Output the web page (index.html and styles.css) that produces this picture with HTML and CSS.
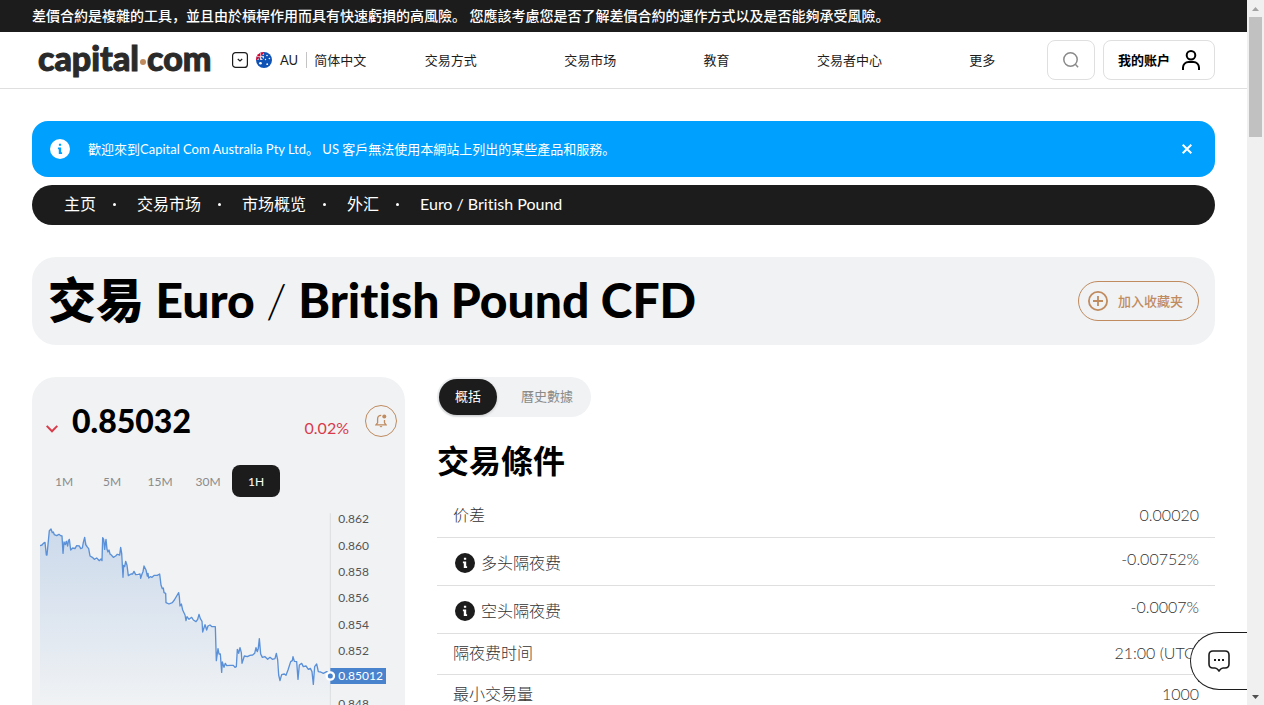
FILE: index.html
```html
<!DOCTYPE html>
<html lang="zh-Hans">
<head>
<meta charset="utf-8">
<meta name="viewport" content="width=device-width, initial-scale=1">
<title>交易 Euro / British Pound CFD</title>
<link rel="stylesheet" href="styles.css">
</head>
<body>
<svg class="defs" width="0" height="0" aria-hidden="true">
  <symbol id="info" viewBox="0 0 20 20"><circle cx="10" cy="10" r="10" fill="currentColor"/><path d="M8.900 4.800h2.300v2H8.900zM7.900 8.400h3.300v4.900h.9v1.800H8.800v-4.900h-.9z" class="info-mark"/></symbol>
</svg>
<div class="page">
  <p class="risk">差價合約是複雜的工具，並且由於槓桿作用而具有快速虧損的高風險。 您應該考慮您是否了解差價合約的運作方式以及是否能夠承受風險。</p>

  <header class="header">
    <a class="logo" href="#">capital<span class="logo-dot"></span>com</a>
    <button class="locale" type="button">
      <svg width="16" height="16" viewBox="0 0 16 16" fill="none" stroke="#1c1c1c"><rect x=".6" y=".6" width="14.800" height="14.800" rx="3" stroke-width="1.200"/><path d="M5.800 7l2.200 2 2.200-2" stroke-width="1.200"/></svg>
      <svg width="16" height="16" viewBox="0 0 16 16"><clipPath id="round"><circle cx="8" cy="8" r="8"/></clipPath><g clip-path="url(#round)"><rect width="16" height="16" fill="#0f52b5"/><path d="M0 0h8v8H0z" fill="#d7e3f5"/><path d="M0 0h8v1L1 8H0z" fill="#d80027"/><path d="M5 5l3 3M8 3.500H5.500M3.500 8V5.500" stroke="#0f52b5" stroke-width="1.600"/><path d="M4.600 1v7M1 4.600h7" stroke="#f3d5dd" stroke-width=".8"/><g fill="#fff"><circle cx="4.500" cy="11.300" r="1.300"/><circle cx="11" cy="3.500" r=".8"/><circle cx="13.400" cy="6.500" r=".8"/><circle cx="9.500" cy="7.500" r=".7"/><circle cx="11.200" cy="12.200" r=".9"/></g></g></svg>
      <span class="country">AU</span><span class="language">简体中文</span>
    </button>
    <nav class="nav">
      <a href="#">交易方式</a><a href="#">交易市场</a><a href="#">教育</a><a href="#">交易者中心</a><a href="#">更多</a>
    </nav>
    <button class="box search" type="button" aria-label="搜索">
      <svg width="16" height="16" viewBox="0 0 16 16" fill="none" stroke="#8a8a8a" stroke-width="1.500"><circle cx="7.500" cy="7.500" r="6.700"/><path d="M12.300 12.300l2.800 3"/></svg>
    </button>
    <button class="box account" type="button">我的账户
      <svg width="18" height="20" viewBox="0 0 18 20" fill="none" stroke="#000" stroke-width="2"><circle cx="9" cy="5.300" r="4.300"/><path d="M1 20v-2.500A5.500 5.500 0 0 1 6.500 12h5a5.500 5.500 0 0 1 5.500 5.500V20"/></svg>
    </button>
  </header>

  <main class="main">
    <div class="notice">
      <svg class="notice-icon" width="20" height="20"><use href="#info"/></svg>
      <p>歡迎來到Capital Com Australia Pty Ltd。 US 客戶無法使用本網站上列出的某些產品和服務。</p>
      <button type="button" aria-label="关闭"><svg width="10" height="10" viewBox="0 0 10 10" stroke="#fff" stroke-width="2"><path d="M.7.700l8.600 8.600M9.300.700L.7 9.300"/></svg></button>
    </div>

    <nav class="crumbs" aria-label="breadcrumb">
      <a href="#">主页</a><i></i><a href="#">交易市场</a><i></i><a href="#">市场概览</a><i></i><a href="#">外汇</a><i></i><span>Euro / British Pound</span>
    </nav>

    <div class="title">
      <h1>交易 Euro <span class="slash">/</span> British Pound CFD</h1>
      <button class="favorite" type="button">
        <svg width="20" height="20" viewBox="0 0 20 20" fill="none" stroke="currentColor" stroke-width="1.800"><circle cx="10" cy="10" r="9.100"/><path d="M5 10h10M10 5v10"/></svg>
        <span>加入收藏夹</span>
      </button>
    </div>

    <div class="columns">
      <section class="quote">
        <div class="price-row">
          <svg width="12" height="8" viewBox="0 0 12 8" fill="none" stroke="#d93b4a" stroke-width="2"><path d="M.7.900L6 6.300 11.300.900"/></svg>
          <strong>0.85032</strong>
          <span class="change">0.02%</span>
          <button type="button" class="alert" aria-label="提醒">
            <svg width="12" height="14" viewBox="0 0 12 14" fill="none" stroke="currentColor" stroke-width="1.300"><path d="M6.200 1.300C3.600 1.300 2.600 3 2.600 5v3.800L.9 10.900h10.200L9.500 8.800V6"/><path d="M4.500 11.900h3L6 13.500z" fill="currentColor" stroke="none"/><circle cx="9.300" cy="2.600" r="2" fill="currentColor" stroke="none"/></svg>
          </button>
        </div>
        <div class="ranges">
          <button type="button">1M</button><button type="button">5M</button><button type="button">15M</button><button type="button">30M</button><button type="button" class="active">1H</button>
        </div>
        <svg class="chart" width="357" height="230" viewBox="60 15 1071 690">
          <defs><linearGradient id="fade" x1="0" y1="85" x2="0" y2="610" gradientUnits="userSpaceOnUse"><stop offset="0" stop-color="#4a83cd" stop-opacity=".22"/><stop offset=".6" stop-color="#4a83cd" stop-opacity=".09"/><stop offset="1" stop-color="#4a83cd" stop-opacity="0"/></linearGradient></defs>
          <path d="M931 40V705" stroke="#dcdee0" stroke-width="3"/>
          <path id="area" fill="url(#fade)" d="M60 705V137L66 135 70 130 75 127 79 165 81 165 88 92 93 87 97 98 103 104 126 108 129 160 132 126 148 118 152 150 170 137 187 144 194 112 206 146 210 168 223 178 246 182 248 113 254 148 258 118 264 156 280 172 299 165 302 142 309 232 317 184 325 227 342 214 362 235 372 198 386 234 419 222 423 255 437 280 438 308 457 308 476 278 480 312 498 362 528 365 537 343 548 396 555 374 586 380 589 482 594 446 605 517 612 502 640 496 649 500 652 448 660 443 666 490 673 468 704 460 718 416 722 462 765 476 776 525 780 542 798 526 819 470 830 485 834 538 838 495 876 515 880 553 890 492 895 515 931 528V705z"/>
          <path class="line" d="M60 137L66 135 70 130 75 127 79 165 81 165 88 92 93 87 97 98 100 96 103 104 110 107 117 103 122 107 126 108 129 160 132 126 136 134 139 124 143 138 145 124 148 118 152 150 158 144 165 146 170 137 178 138 182 146 187 144 190 127 194 112 197 134 201 140 206 146 210 168 217 172 223 178 230 174 238 182 243 177 246 182 248 113 251 118 254 148 256 130 258 118 261 148 264 156 267 150 270 162 274 165 280 172 287 168 292 163 299 165 302 142 305 160 309 232 311 196 314 200 317 184 321 196 325 227 333 222 338 222 342 214 347 224 355 223 360 222 362 235 366 222 369 215 372 198 378 210 382 228 384 220 386 234 391 230 396 232 403 226 412 226 419 222 423 255 427 266 430 264 432 278 437 280 438 308 447 312 457 308 463 300 470 288 476 278 478 290 480 318 484 312 488 330 495 345 498 362 501 350 507 358 515 352 520 360 528 365 533 358 537 343 541 356 546 364 548 396 555 374 560 390 564 378 570 375 576 380 586 380 589 482 594 446 597 462 601 462 605 517 607 486 612 502 616 490 620 497 630 496 640 496 645 502 649 500 652 448 656 460 660 443 664 458 666 490 673 468 682 470 690 466 698 465 704 460 708 443 712 455 715 445 718 416 722 462 727 472 735 470 743 478 750 472 757 478 765 476 769 460 773 480 776 525 780 542 785 524 793 522 798 526 804 510 812 485 817 482 819 470 823 484 830 485 834 538 838 495 845 490 850 500 858 498 865 508 871 505 876 515 880 553 884 500 890 492 895 515 902 516 910 520 920 515 928 520 931 528"/>
          <g class="ticks"><text x="955" y="70">0.862</text><text x="955" y="151">0.860</text><text x="955" y="229">0.858</text><text x="955" y="307">0.856</text><text x="955" y="388">0.854</text><text x="955" y="466">0.852</text><text x="955" y="625">0.848</text></g>
          <path d="M931 504h167v48H931z" fill="#4a83cd"/>
          <text class="tag" x="955" y="541">0.85012</text>
          <circle cx="931" cy="528" r="11" fill="#4a83cd" stroke="#fff" stroke-width="7"/>
        </svg>
      </section>

      <section class="details">
        <div class="tabs"><button type="button" class="active">概括</button><button type="button">曆史數據</button></div>
        <h2>交易條件</h2>
        <table class="terms">
          <tr><th scope="row">价差</th><td>0.00020</td></tr>
          <tr class="tall"><th scope="row"><span><svg width="20" height="20"><use href="#info"/></svg>多头隔夜费</span></th><td>-0.00752%</td></tr>
          <tr class="tall"><th scope="row"><span><svg width="20" height="20"><use href="#info"/></svg>空头隔夜费</span></th><td>-0.0007%</td></tr>
          <tr><th scope="row">隔夜费时间</th><td>21:00 (UTC)</td></tr>
          <tr><th scope="row">最小交易量</th><td>1000</td></tr>
        </table>
      </section>
    </div>
  </main>
  <button class="chat" type="button" aria-label="聊天">
    <svg width="22" height="22" viewBox="0 0 22 22" fill="none" stroke="#1c1c1c" stroke-width="1.600"><path d="M5 1h12q4 0 4 4v9q0 4-4 4h-2c-1.800 0-2 .4-4 3-2-2.600-2.200-3-4-3H5q-4 0-4-4V5q0-4 4-4z"/><path d="M6 10h2m2 0h2m2 0h2" stroke-width="2"/></svg>
  </button>
</div>
<div class="scrollbar" aria-hidden="true">
  <svg width="17" height="17"><path d="M5 11l3.500-4 3.500 4z" fill="#a3a3a3"/></svg>
  <div class="thumb"></div>
  <svg class="down" width="17" height="17"><path d="M5 7l3.500 4L12 7z" fill="#505050"/></svg>
</div>
</body>
</html>
```

FILE: styles.css
```css
* { box-sizing: border-box; }
body {
  margin: 0;
  display: flex;
  height: 100vh;
  overflow: hidden;
  background: #fff;
  color: #000;
  font-family: Lato, "Noto Sans CJK SC", sans-serif;
  font-size: 16px;
  font-variant-ligatures: none;
}
p, h1, h2 { margin: 0; }
a { color: inherit; text-decoration: none; }
button {
  padding: 0;
  border: 0;
  background: none;
  color: inherit;
  font: inherit;
  cursor: pointer;
}
svg { flex: none; }
.defs { position: absolute; }
.page { position: relative; flex: 1; min-width: 0; overflow: hidden; }

.risk {
  height: 32px;
  padding: 0 32px;
  background: #1c1c1c;
  color: #fff;
  font-size: 14px;
  font-weight: 500;
  line-height: 32px;
  white-space: nowrap;
}

.header {
  display: flex;
  align-items: center;
  height: 57px;
  padding: 0 32px 0 38px;
  border-bottom: 1px solid #dfdfdf;
  font-size: 13px;
  line-height: 24px;
}
.logo {
  display: flex;
  align-items: center;
  width: 172px;
  padding-bottom: 4px;
  color: #2a2a2a;
  font-size: 34px;
  font-weight: 900;
  line-height: 40px;
  -webkit-text-stroke: 1px #2a2a2a;
}
.logo-dot { flex: none; width: 6px; height: 6px; margin: 8px 1px 0; border-radius: 50%; background: #c08b5f; }
.locale { display: flex; align-items: center; gap: 8px; margin-left: 22px; color: #1c1c1c; white-space: nowrap; }
.country { padding-right: 8px; border-right: 1px solid #c4c4c4; line-height: 16px; }
.language { margin-left: -1px; }
.nav { display: flex; flex: 1; justify-content: space-around; margin: 0 8px 0 15px; color: #1c1c1c; white-space: nowrap; }
.box {
  display: flex;
  align-items: center;
  justify-content: center;
  height: 40px;
  border: 1px solid #dfdfdf;
  border-radius: 8px;
}
.search { width: 48px; }
.account { gap: 12px; width: 112px; margin-left: 8px; font-weight: 700; }

.main { padding: 32px; }
.notice {
  display: flex;
  align-items: center;
  gap: 18px;
  height: 56px;
  padding: 0 23px 0 18px;
  border-radius: 16px;
  background: #00a0ff;
  color: #fff;
  font-size: 13px;
  line-height: 24px;
}
.notice p { flex: 1; }
.notice button { display: flex; }
.notice-icon { --mark: #00a0ff; }
.info-mark { fill: var(--mark, #fff); }

.crumbs {
  display: flex;
  align-items: center;
  height: 40px;
  margin-top: 8px;
  padding: 0 32px 2px;
  border-radius: 20px;
  background: #1c1c1c;
  color: #fff;
  line-height: 24px;
}
.crumbs i { width: 3px; height: 3px; margin: 0 21px 0 17px; border-radius: 50%; background: #fff; }

.title {
  display: flex;
  align-items: center;
  justify-content: space-between;
  height: 88px;
  margin-top: 32px;
  padding: 0 16px;
  border-radius: 24px;
  background: #f0f2f4;
}
h1 { padding-bottom: 2px; font-size: 48px; font-weight: 900; line-height: 56px; white-space: nowrap; }
.slash { font-weight: 300; }
.favorite {
  display: flex;
  align-items: center;
  gap: 10px;
  height: 40px;
  padding: 0 15px 0 9px;
  border: 1px solid #c08b5f;
  border-radius: 20px;
  color: #c08b5f;
  font-size: 13px;
  font-weight: 500;
}
.favorite span { padding-bottom: 2px; }

.columns { display: grid; grid-template-columns: 373px 1fr; gap: 32px; margin-top: 32px; }
.quote { padding: 28px 8px 8px; border-radius: 24px 24px 0 0; background: #f0f2f4; }
.price-row { display: flex; align-items: center; height: 32px; padding-left: 6px; }
.price-row > svg { margin-top: 16px; }
.price-row strong { flex: 1; margin-left: 14px; font-size: 32px; font-weight: 900; line-height: 32px; }
.change { margin: 14px 16px 0 0; color: #d93b4a; font-weight: 400; line-height: 16px; }
.alert {
  display: flex;
  align-items: center;
  justify-content: center;
  width: 32px;
  height: 32px;
  border: 1px solid #c08b5f;
  border-radius: 50%;
  color: #c08b5f;
}
.ranges { display: flex; margin-top: 28px; }
.ranges button { width: 48px; height: 32px; border-radius: 8px; color: #8a8a8a; font-size: 12px; }
.ranges .active { background: #1c1c1c; color: #fff; }
.chart { display: block; margin-top: 8px; }
.line { fill: none; stroke: #5a90d8; stroke-width: 4; stroke-linejoin: round; }
.ticks { fill: #555; font-size: 36px; }
.tag { fill: #fff; font-size: 36px; }

.tabs { display: inline-flex; gap: 8px; padding: 2px; border-radius: 20px; background: #f0f2f4; font-size: 13px; vertical-align: top; }
.tabs button { height: 36px; padding: 0 16px 3px; border-radius: 18px; color: #8a8a8a; }
.tabs .active { background: #1c1c1c; color: #fff; box-shadow: 0 1px 3px #0003; }
h2 { margin-top: 24px; font-size: 32px; font-weight: 700; line-height: 40px; }
.terms { width: 100%; margin-top: 15px; border-collapse: collapse; color: #333; font-weight: 300; line-height: 24px; }
.terms th, .terms td { height: 41px; padding: 0 16px 2px; border-bottom: 1px solid #dfdfdf; }
.terms th { font-weight: 300; text-align: left; }
.terms td { text-align: right; }
.terms .tall th, .terms .tall td { height: 48px; }
.terms .tall th { padding: 4px 16px 0; }
.terms .tall td { padding-bottom: 4px; }
.terms span { display: flex; align-items: center; gap: 6px; padding-left: 2px; }
.terms svg { color: #1c1c1c; }

.chat {
  position: absolute;
  right: 0;
  bottom: 15px;
  display: flex;
  align-items: center;
  width: 57px;
  height: 58px;
  padding-left: 17px;
  border: 1px solid #1c1c1c;
  border-right: 0;
  border-radius: 29px 0 0 29px;
  background: #fff;
}

.scrollbar { display: flex; flex: none; flex-direction: column; width: 17px; background: #f0f0f0; }
.thumb { width: 13px; height: 120px; margin: 0 2px; background: #c1c1c1; }
.down { margin-top: auto; }
```
